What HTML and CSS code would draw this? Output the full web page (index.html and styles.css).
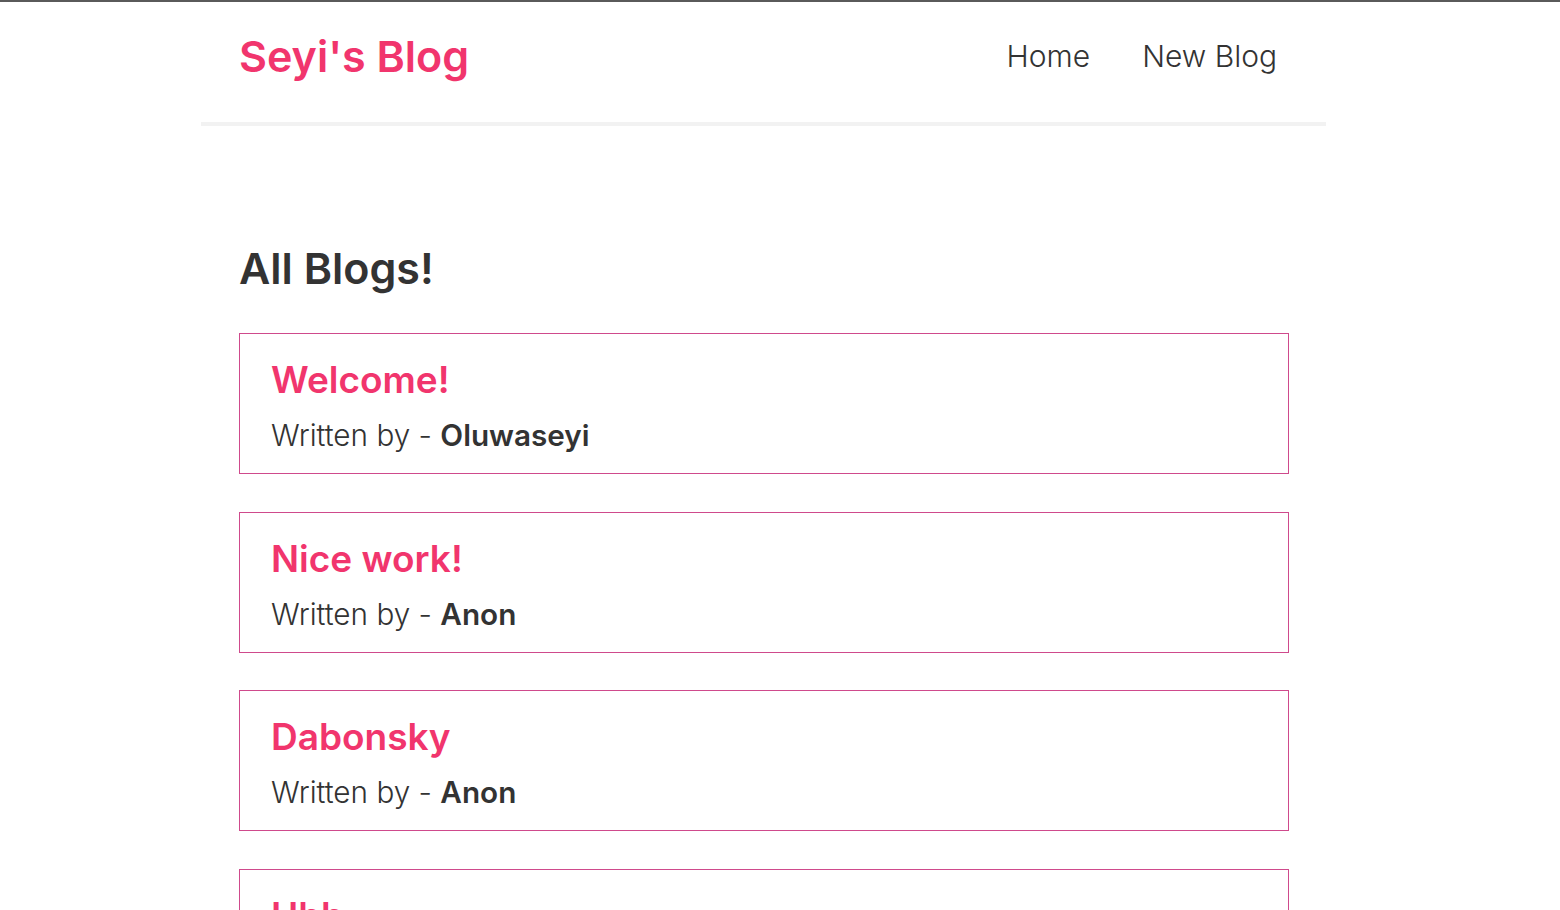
FILE: index.html
```html
<!DOCTYPE html>
<html lang="en">
<head>
<meta charset="utf-8">
<title>Seyi's Blog</title>
<link rel="stylesheet" href="styles.css">
</head>
<body>
<div class="app">
  <nav class="navbar">
    <h1 class="logo">Seyi's Blog</h1>
    <div class="links">
      <a href="#">Home</a>
      <a href="#" class="new">New Blog</a>
    </div>
  </nav>
  <div class="content">
    <h2 class="heading">All Blogs!</h2>
    <div class="blog-preview">
      <h2 class="title">Welcome!</h2>
      <p class="author">Written by - <b>Oluwaseyi</b></p>
    </div>
    <div class="blog-preview">
      <h2 class="title">Nice work!</h2>
      <p class="author">Written by - <b>Anon</b></p>
    </div>
    <div class="blog-preview">
      <h2 class="title">Dabonsky</h2>
      <p class="author">Written by - <b>Anon</b></p>
    </div>
    <div class="blog-preview">
      <h2 class="title">Uhh</h2>
      <p class="author">Written by - <b>Anon</b></p>
    </div>
  </div>
</div>
</body>
</html>
```
FILE: styles.css
```css
* { box-sizing: border-box; }
html, body { margin: 0; padding: 0; }
body {
  font-family: Inter, "Noto Sans", sans-serif;
  color: #333;
  background: #fff;
  border-top: 2px solid #5a5a5a;
  height: 910px;
  overflow: hidden;
}
.app { width: 1527px; }
.navbar {
  width: 1125px;
  margin: 0 auto;
  padding: 31px 38px 43px;
  display: flex;
  align-items: center;
  border-bottom: 4px solid #f2f2f2;
}
.logo {
  margin: 0;
  font-size: 43px;
  line-height: 46px;
  font-weight: 600;
  color: #f1356d;
}
.links { margin-left: auto; display: flex; }
.links a {
  margin-left: 30px;
  padding: 0 11px;
  font-size: 30px;
  line-height: 40px;
  font-weight: 300;
  color: #333;
  text-decoration: none;
}
.content {
  width: 1125px;
  margin: 0 auto;
  padding: 117px 37px 0 38px;
}
.heading {
  margin: 0 0 40px;
  font-size: 43px;
  line-height: 50px;
  font-weight: 600;
}
.blog-preview {
  border: 1px solid #cf4a8c;
  padding: 23px 31px 14px;
  margin-bottom: 37.67px;
  height: 141px;
}
.title {
  margin: 0 0 12px;
  font-size: 37px;
  line-height: 46px;
  font-weight: 600;
  color: #f1356d;
}
.author {
  margin: 0;
  font-size: 29.7px;
  line-height: 40px;
  font-weight: 300;
}
.author b { font-weight: 600; }
```
